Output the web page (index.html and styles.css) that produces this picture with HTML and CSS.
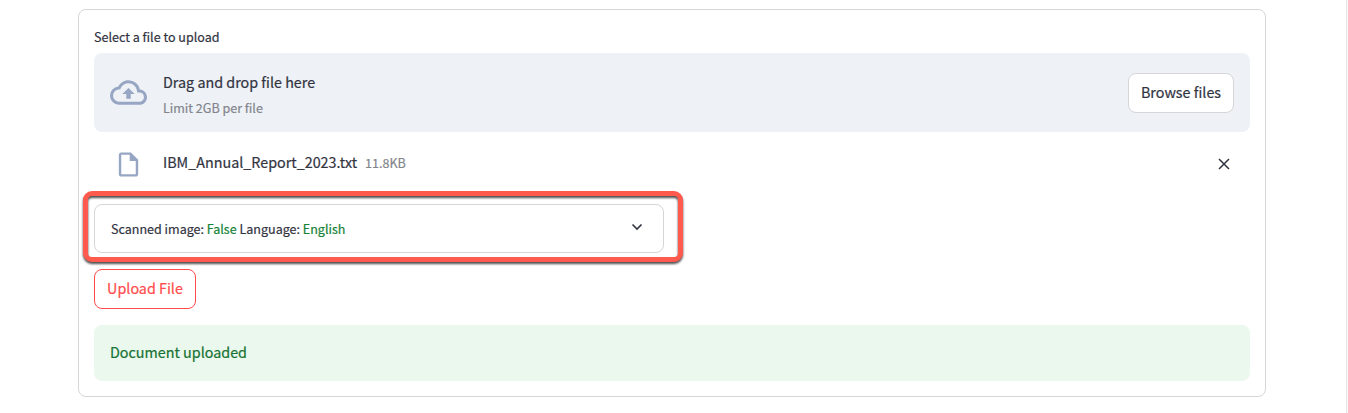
FILE: index.html
```html
<!DOCTYPE html>
<html lang="en">
<head>
<meta charset="utf-8">
<title>Upload</title>
<link rel="stylesheet" href="styles.css">
</head>
<body>
<main class="page">
  <section class="card">
    <div class="label">Select a file to upload</div>
    <div class="dropzone">
      <svg class="cloud" viewBox="0 0 24 24"><path d="M19.35 10.04A7.49 7.49 0 0 0 12 4C9.11 4 6.6 5.64 5.35 8.04A5.994 5.994 0 0 0 0 14c0 3.31 2.69 6 6 6h13c2.76 0 5-2.24 5-5 0-2.64-2.05-4.78-4.65-4.96zM19 18H6c-2.21 0-4-1.79-4-4 0-2.05 1.53-3.76 3.56-3.97l1.07-.11.5-.95A5.469 5.469 0 0 1 12 6c2.62 0 4.88 1.86 5.39 4.43l.3 1.5 1.53.11A2.98 2.98 0 0 1 22 15c0 1.65-1.35 3-3 3zM8 13h2.55v3h2.9v-3H16l-4-4-4 4z"/></svg>
      <div class="hint">
        <div class="hint-title">Drag and drop file here</div>
        <div class="hint-limit">Limit 2GB per file</div>
      </div>
      <button class="btn browse">Browse files</button>
    </div>
    <div class="file">
      <svg class="doc" viewBox="0 0 24 24"><path d="M14 2H6c-1.1 0-2 .9-2 2v16c0 1.1.9 2 2 2h12c1.1 0 2-.9 2-2V8l-6-6zM6 20V4h7v5h5v11H6z"/></svg>
      <span class="file-name">IBM_Annual_Report_2023.txt</span>
      <span class="file-size">11.8KB</span>
      <svg class="close" viewBox="0 0 12 12"><path d="M1 1l10 10M11 1L1 11"/></svg>
    </div>
    <div class="expander">
      <span class="summary">Scanned image: <b>False</b> Language: <b>English</b></span>
      <svg class="chevron" viewBox="0 0 12 8"><path d="M1.5 1.5L6 6l4.5-4.5"/></svg>
      <div class="highlight"></div>
    </div>
    <button class="btn upload">Upload File</button>
    <div class="alert"><span>Document uploaded</span></div>
  </section>
</main>
</body>
</html>
```
FILE: styles.css
```css
* { box-sizing: border-box; }
body {
  margin: 0;
  background: #fafafa;
  color: #31333f;
  font-family: "Noto Sans CJK SC", sans-serif;
  font-size: 14.33px;
  -webkit-text-stroke: .2px currentColor;
}
.page {
  width: 1347px;
  height: 413px;
  padding: 9px 80px 0 78px;
  background: #fff;
  border-right: 1px solid #e6e6ea;
  overflow: hidden;
}
.card {
  display: flex;
  flex-direction: column;
  width: 1188px;
  height: 388px;
  padding: 15px;
  border: 1px solid #d6d6d9;
  border-radius: 8px;
}
.label {
  height: 28px;
  padding-top: 2px;
  font-size: 12.54px;
  line-height: 20px;
}
.dropzone {
  display: flex;
  align-items: center;
  height: 79px;
  padding: 0 16px;
  background: #eef1f6;
  border-radius: 8px;
}
.cloud { width: 37px; height: 37px; fill: #97a6c3; }
.hint { flex: 1; margin-left: 16px; padding-top: 3px; }
.hint-title { line-height: 26px; }
.hint-limit { font-size: 12.54px; line-height: 25px; color: #83858c; }
.btn {
  height: 40px;
  padding: 0 0 3px;
  background: #fff;
  border: 1px solid #d6d6d9;
  border-radius: 8px;
  color: inherit;
  font: inherit;
  white-space: nowrap;
}
.browse { width: 106px; }
.file {
  display: flex;
  align-items: center;
  height: 64px;
  padding: 0 20px 0 20px;
}
.doc { width: 29px; height: 29px; fill: #97a6c3; }
.file-name { margin-left: 20px; padding-bottom: 5px; }
.file-size { flex: 1; margin-left: 8px; padding-bottom: 3px; font-size: 12.54px; color: #83858c; }
.close { width: 12px; height: 12px; fill: none; stroke: #31333f; stroke-width: 1.5; }
.expander {
  position: relative;
  display: flex;
  align-items: center;
  justify-content: space-between;
  width: 570px;
  height: 49px;
  margin-top: 8px;
  padding: 0 20px 0 16px;
  border: 1px solid #d6d6d9;
  border-radius: 8px;
  font-size: 12.54px;
}
.expander b { font-weight: 400; color: #158237; }
.chevron { width: 12px; height: 8px; margin-bottom: 3px; fill: none; stroke: #31333f; stroke-width: 1.6; }
.highlight {
  position: absolute;
  left: -12px;
  top: -14px;
  width: 600px;
  height: 71px;
  border: 5px solid #ff5a4d;
  border-radius: 9px;
  filter: drop-shadow(0 2px 1px rgba(0, 0, 0, .7));
}
.upload { width: 102px; margin-top: 16px; border-color: #ff4b4b; color: #ff4b4b; }
.alert {
  display: flex;
  align-items: center;
  height: 56px;
  margin-top: 16px;
  padding: 0 16px 3px;
  background: #eaf8ee;
  border-radius: 8px;
  color: #177233;
}
```
